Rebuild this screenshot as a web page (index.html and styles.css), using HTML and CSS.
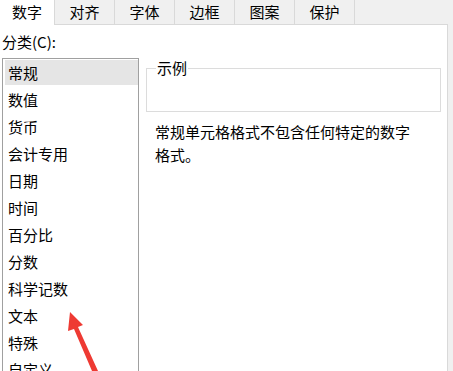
FILE: index.html
```html
<!DOCTYPE html>
<html lang="zh">
<head>
<meta charset="utf-8">
<link rel="stylesheet" href="styles.css">
</head>
<body>
<div class="dialog">
  <div class="tabs">
    <div class="tab first active">数字</div>
    <div class="tab">对齐</div>
    <div class="tab">字体</div>
    <div class="tab">边框</div>
    <div class="tab">图案</div>
    <div class="tab">保护</div>
  </div>
  <div class="panel">
    <div class="left">
      <div class="label">分类(C):</div>
      <div class="list">
        <div class="item selected">常规</div>
        <div class="item">数值</div>
        <div class="item">货币</div>
        <div class="item">会计专用</div>
        <div class="item">日期</div>
        <div class="item">时间</div>
        <div class="item">百分比</div>
        <div class="item">分数</div>
        <div class="item">科学记数</div>
        <div class="item">文本</div>
        <div class="item">特殊</div>
        <div class="item">自定义</div>
      </div>
    </div>
    <div class="right">
      <fieldset class="sample">
        <legend>示例</legend>
        <div class="sample-body"></div>
      </fieldset>
      <p class="desc">常规单元格格式不包含任何特定的数字格式。</p>
    </div>
  </div>
</div>
<svg class="arrow" width="453" height="371" viewBox="0 0 453 371">
  <polygon points="70,312 83,325 78,327 98,371 92,371 74,329 68,331" fill="#ee3a33"/>
</svg>
</body>
</html>
```
FILE: styles.css
```css
html, body {
  margin: 0;
  padding: 0;
}
body {
  width: 453px;
  height: 371px;
  overflow: hidden;
  background: #f0f0f0;
  font-family: "Noto Sans CJK SC", "Noto Sans", sans-serif;
  font-size: 15px;
  color: #000;
  position: relative;
}
.dialog {
  display: flex;
  flex-direction: column;
  height: 371px;
}
.tabs {
  display: flex;
  height: 24px;
}
.tab {
  width: 59px;
  height: 24px;
  line-height: 24px;
  text-align: center;
  border-right: 1px solid #d9d9d9;
  background: #f0f0f0;
}
.tab.first {
  width: 54px;
}
.tab.active {
  background: #fff;
  position: relative;
  z-index: 1;
  height: 25px;
}
.panel {
  flex: 1;
  display: flex;
  background: #fff;
  border-top: 1px solid #d9d9d9;
  border-right: 1px solid #d9d9d9;
  width: 447px;
}
.left {
  padding-left: 2px;
  width: 137px;
}
.label {
  margin-top: 7px;
  line-height: 20px;
  height: 20px;
}
.list {
  margin-top: 6px;
  border: 1px solid #a0a0a0;
  border-bottom: none;
  padding: 1px 0 0 2px;
  height: 320px;
  overflow: hidden;
}
.item {
  height: 25px;
  line-height: 25px;
  margin-bottom: 2px;
  padding-left: 3px;
  white-space: nowrap;
}
.item.selected {
  background: #e5e5e5;
}
.right {
  margin-left: 7px;
  width: 295px;
}
.sample {
  margin: 35px 0 0 0;
  padding: 0 9px;
  border: 1px solid #dcdcdc;
  width: 295px;
  box-sizing: border-box;
}
.sample legend {
  padding: 0 1px;
  line-height: 16px;
  height: 16px;
}
.sample-body {
  height: 35px;
}
.desc {
  margin: 8px 0 0 9px;
  width: 262px;
  line-height: 23px;
}
.arrow {
  position: absolute;
  left: 0;
  top: 0;
  pointer-events: none;
}
```
